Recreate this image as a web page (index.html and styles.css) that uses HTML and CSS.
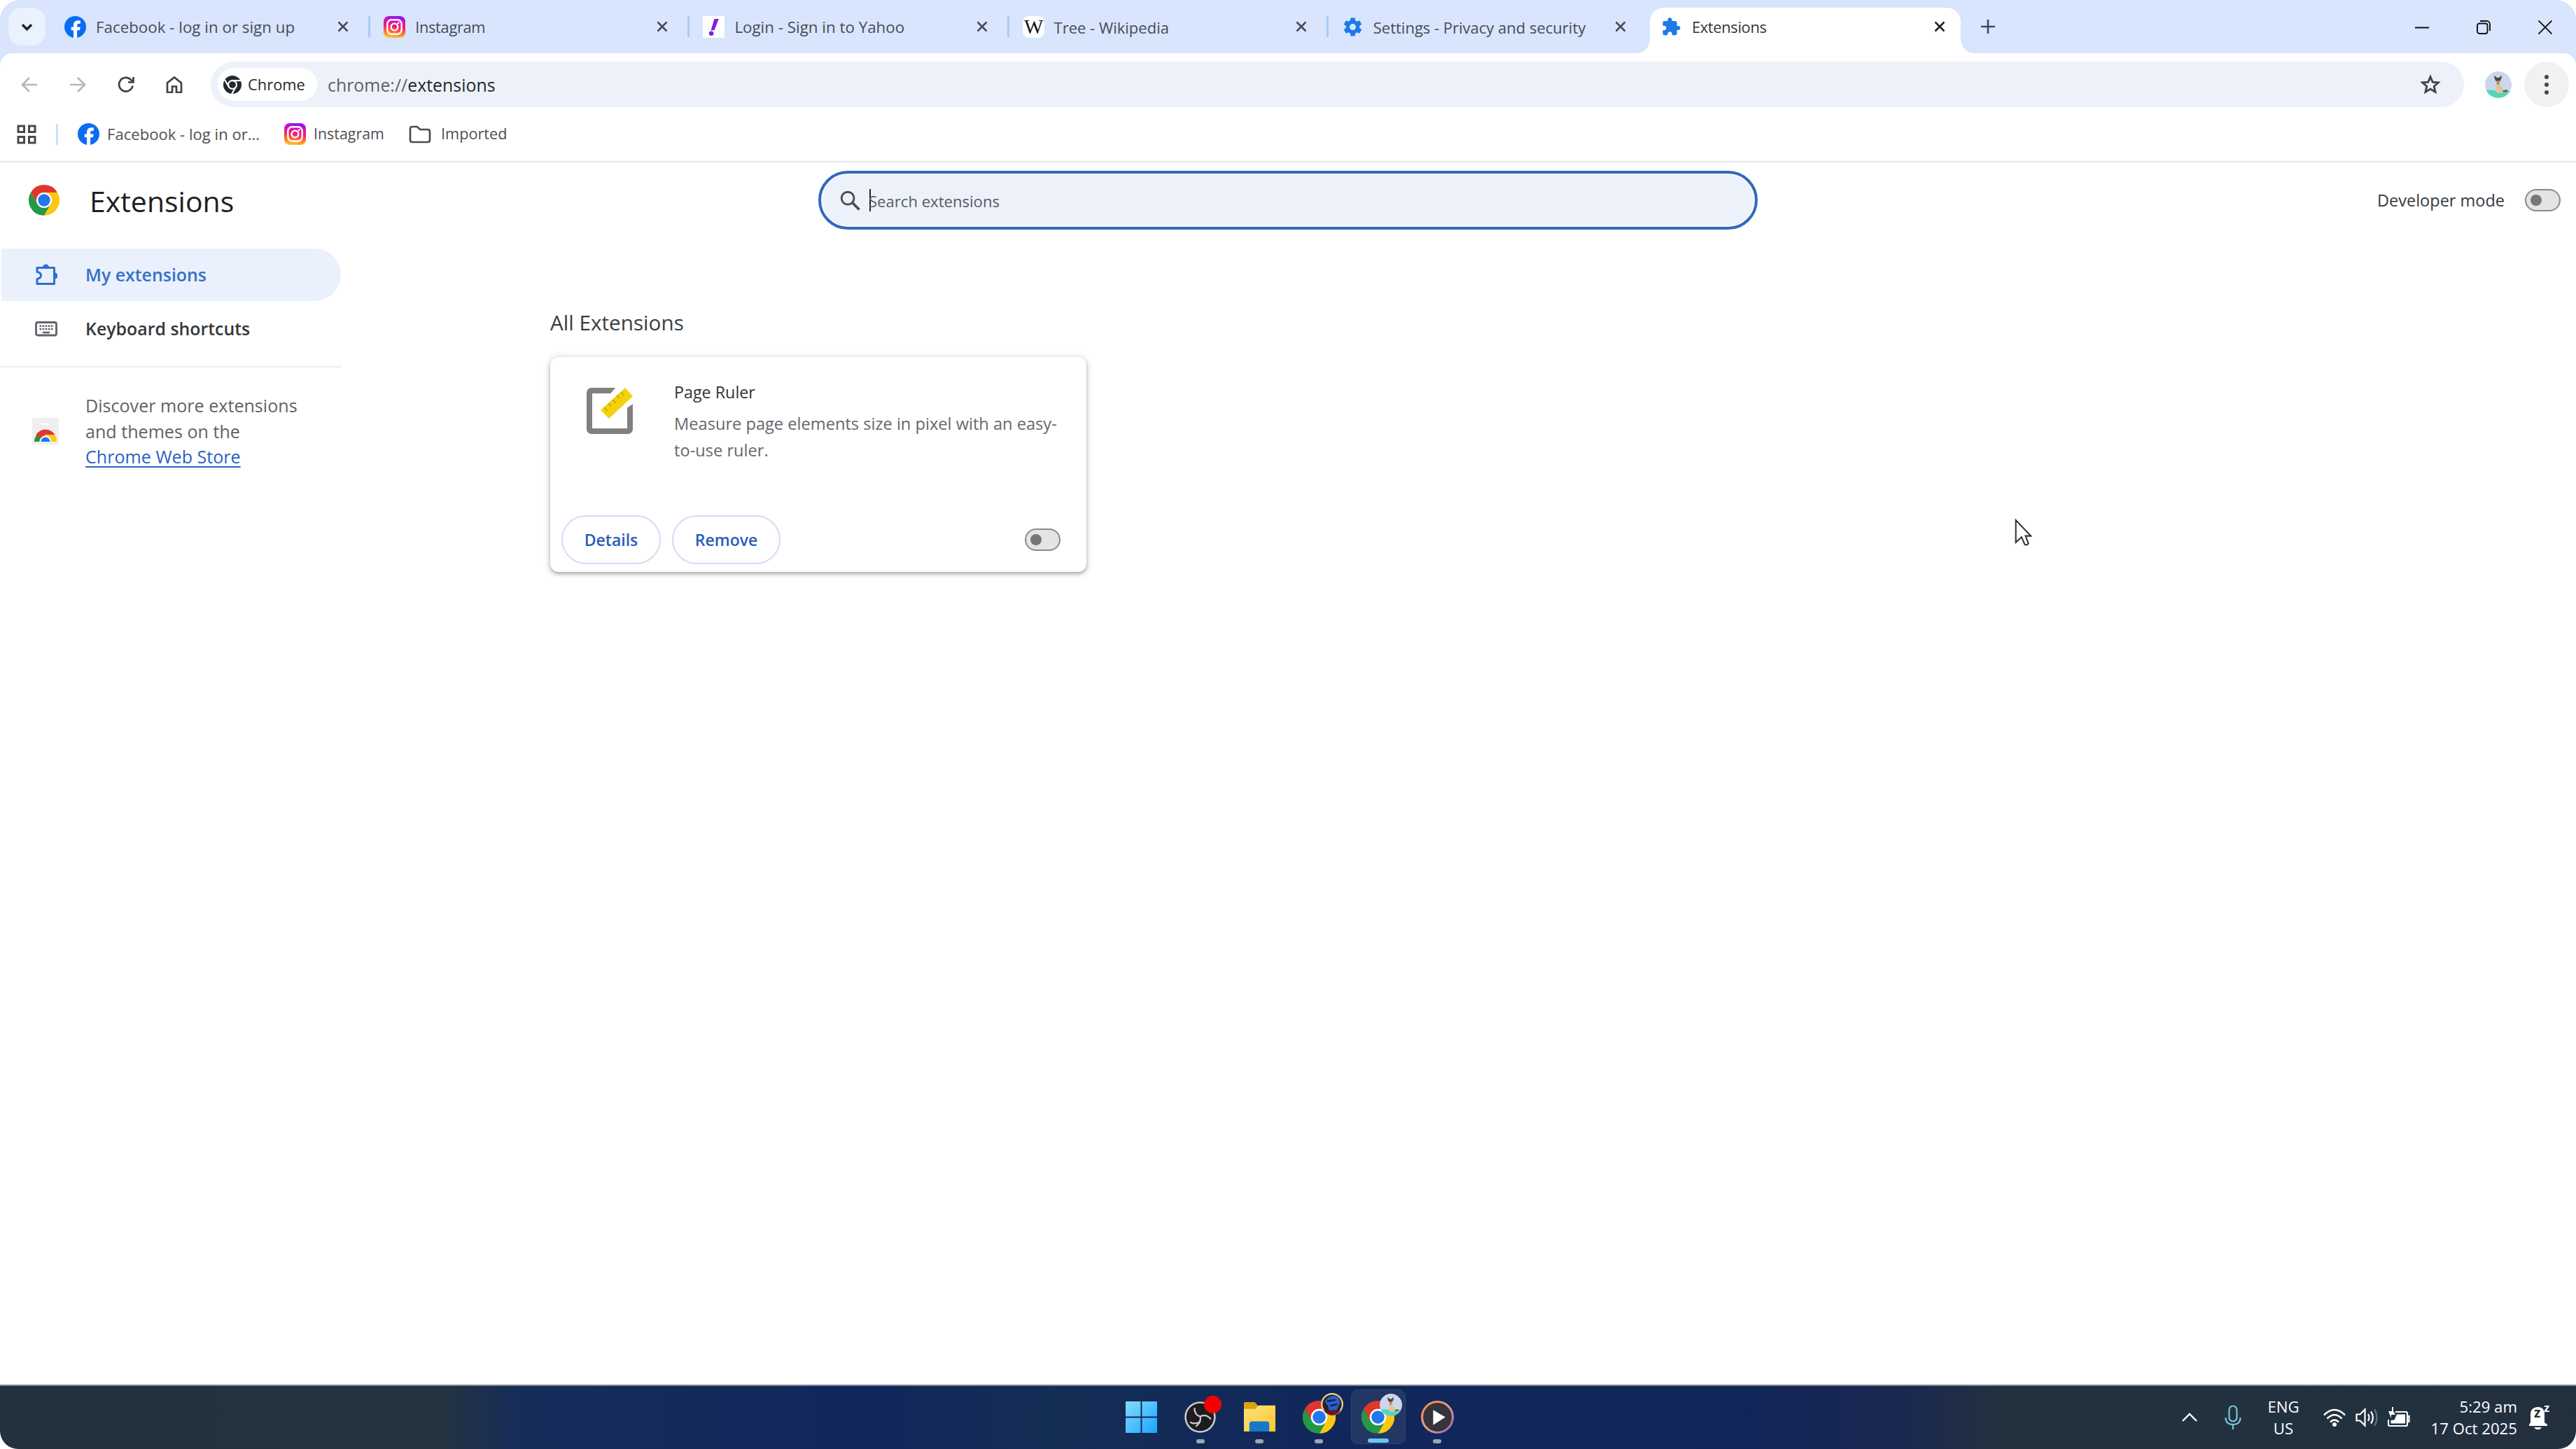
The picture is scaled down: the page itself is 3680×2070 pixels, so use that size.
FILE: index.html
```html
<!DOCTYPE html>
<html lang="en">
<head>
<meta charset="utf-8">
<title>Extensions</title>
<link rel="stylesheet" href="styles.css">
</head>
<body>
<svg class="defs" aria-hidden="true">
  <defs>
    <linearGradient id="ig" x1="0.35" y1="1" x2="0.5" y2="0">
      <stop offset="0" stop-color="#ffc93c"/><stop offset=".25" stop-color="#ff7a2a"/><stop offset=".5" stop-color="#f5206a"/><stop offset=".8" stop-color="#d30fc4"/><stop offset="1" stop-color="#8a18ea"/>
    </linearGradient>
    <linearGradient id="win" x1="0" y1="0" x2="1" y2="1"><stop offset="0" stop-color="#86dcff"/><stop offset="1" stop-color="#18a4ff"/></linearGradient>
    <linearGradient id="fold" x1="0" y1="0" x2="1" y2="1"><stop offset="0" stop-color="#ffe27d"/><stop offset="1" stop-color="#fbc62f"/></linearGradient>
    <linearGradient id="ring" x1="0" y1="0" x2="1" y2="1"><stop offset="0" stop-color="#f58a3c"/><stop offset=".5" stop-color="#e2a08c"/><stop offset="1" stop-color="#9a5fd0"/></linearGradient>
    <clipPath id="round"><circle cx="20" cy="20" r="20"/></clipPath>
  </defs>
  <symbol id="fb" viewBox="0 0 32 32"><circle cx="16" cy="16" r="16" fill="#0a6cf2"/><path d="M13.4 32V20.8H10v-4.7h3.4v-2.2c0-5.1 2.4-7.4 7.2-7.4.9 0 2.300.2 3 .4v4.200c-.3 0-.9-.1-1.700-.1-2.300 0-3.200.9-3.200 3.100v2h4.700l-.8 4.700h-3.900V32z" fill="#fff"/></symbol>
  <symbol id="insta" viewBox="0 0 32 32"><rect width="32" height="32" rx="8" fill="url(#ig)"/><g fill="none" stroke="#fff" stroke-width="2.500"><rect x="5.500" y="5.500" width="21" height="21" rx="6"/><circle cx="16" cy="16" r="5"/></g><circle cx="21.800" cy="10.200" r="1.500" fill="#fff"/></symbol>
  <symbol id="chrome" viewBox="0 0 48 48"><circle cx="24" cy="24" r="13" fill="#fff"/><path fill="#e0372d" d="M24 12h20.780A23.990 23.990 0 0 0 3.220 12.003L13.610 30A11.985 11.985 0 0 1 24 12z"/><path fill="#fdc813" d="M34.390 30.003 24 48A23.996 23.996 0 0 0 44.780 12H24A11.985 11.985 0 0 1 34.390 30.003z"/><path fill="#259847" d="M13.609 30.003 3.218 12.006A23.994 23.994 0 0 0 24.003 48L34.393 30.003A11.985 11.985 0 0 1 13.609 30.003z"/><circle cx="24" cy="24" r="9.500" fill="#2277ea"/></symbol>
  <symbol id="cross" viewBox="0 0 16 16"><path d="M1.500 1.500l13 13M14.500 1.500l-13 13" fill="none" stroke="currentColor" stroke-width="2.500"/></symbol>
  <symbol id="dog" viewBox="0 0 40 40"><g clip-path="url(#round)"><rect width="40" height="40" fill="#ccd6ec"/><path d="M0 30c8-5 14-1 20 0s12 1 20-1v11H0z" fill="#55d6bb"/><path d="M17 16c-1 6-1 11 0 16h11l4-2c-6-1-7-8-10-14z" fill="#dcc7a5"/><path d="M14 6l4 3.500h3L25 6c0 4-1 7-3 9h-5c-2-2-3-5-3-9z" fill="#51463f"/><path d="M17.500 14h4.500l-1 6h-3z" fill="#a98a68"/><path d="M27 30l7-1" stroke="#6b5138" stroke-width="2.500"/></g></symbol>
</svg>

<header class="tabs">
  <button class="tab-search"><svg viewBox="0 0 16 16"><path d="M3 5.500l5 5 5-5" fill="none" stroke="#1f2328" stroke-width="2.600"/></svg></button>
  <nav class="tab-list">
    <div class="tab"><svg class="fav"><use href="#fb"/></svg><span class="title">Facebook - log in or sign up</span><svg class="x"><use href="#cross"/></svg></div>
    <div class="tab"><svg class="fav"><use href="#insta"/></svg><span class="title narrow">Instagram</span><svg class="x"><use href="#cross"/></svg></div>
    <div class="tab"><svg class="fav" viewBox="0 0 32 32"><rect width="32" height="32" fill="#fff"/><path d="M17 4h6.500L17 21h-5z" fill="#7a22d8"/><circle cx="12.500" cy="25.500" r="3.400" fill="#7a22d8"/></svg><span class="title">Login - Sign in to Yahoo</span><svg class="x"><use href="#cross"/></svg></div>
    <div class="tab"><span class="fav wiki">W</span><span class="title tight">Tree - Wikipedia</span><svg class="x"><use href="#cross"/></svg></div>
    <div class="tab plain"><svg class="fav" viewBox="0 0 24 24"><path fill="#1d7ae8" d="M19.430 12.980c.04-.32.070-.64.070-.98s-.03-.66-.07-.98l2.110-1.650c.19-.15.240-.42.120-.64l-2-3.460c-.12-.22-.39-.3-.61-.22l-2.490 1c-.52-.4-1.080-.73-1.690-.98l-.38-2.650C14.460 2.180 14.250 2 14 2h-4c-.25 0-.46.180-.49.420l-.38 2.650c-.61.250-1.170.590-1.690.980l-2.490-1c-.23-.09-.49 0-.61.220l-2 3.460c-.13.220-.07.490.120.640l2.110 1.650c-.04.320-.07.650-.07.980s.03.660.070.980l-2.110 1.650c-.19.150-.24.420-.12.640l2 3.460c.12.220.39.300.61.220l2.490-1c.52.400 1.080.730 1.690.980l.38 2.650c.03.240.24.420.49.420h4c.25 0 .46-.18.490-.42l.38-2.650c.61-.25 1.170-.59 1.690-.98l2.490 1c.23.090.49 0 .61-.22l2-3.460c.12-.22.070-.49-.12-.64l-2.110-1.650zM12 15.500c-1.930 0-3.500-1.570-3.500-3.500s1.570-3.500 3.500-3.500 3.500 1.570 3.500 3.500-1.570 3.500-3.500 3.500z"/></svg><span class="title tight">Settings - Privacy and security</span><svg class="x"><use href="#cross"/></svg></div>
    <div class="tab active"><svg class="fav" viewBox="0 0 24 24"><path fill="#1d7ae8" transform="translate(.8 .8) scale(.92)" d="M20.500 11H19V7c0-1.100-.9-2-2-2h-4V3.500C13 2.120 11.880 1 10.500 1S8 2.120 8 3.500V5H4c-1.100 0-1.990.9-1.990 2v3.800H3.500c1.490 0 2.700 1.210 2.700 2.700s-1.210 2.700-2.700 2.700H2V20c0 1.100.9 2 2 2h3.800v-1.500c0-1.490 1.210-2.700 2.700-2.700 1.490 0 2.700 1.210 2.700 2.700V22H17c1.100 0 2-.9 2-2v-4h1.500c1.380 0 2.500-1.120 2.500-2.500S21.880 11 20.500 11z"/></svg><span class="title narrow">Extensions</span><svg class="x"><use href="#cross"/></svg></div>
  </nav>
  <svg class="plus" viewBox="0 0 20 20"><path d="M10 0v20M0 10h20" stroke="#3d4a60" stroke-width="2.600"/></svg>
  <div class="win-controls">
    <svg viewBox="0 0 20 20"><path d="M0 10.500h20" stroke="#111" stroke-width="2"/></svg>
    <svg viewBox="0 0 20 20"><g fill="none" stroke="#111" stroke-width="1.900"><rect x="1" y="4.500" width="14.500" height="14.500" rx="3"/><path d="M5 1h9.500a4.500 4.500 0 0 1 4.500 4.500V15"/></g></svg>
    <svg viewBox="0 0 20 20"><path d="M.5.5l19 19M19.500.5l-19 19" stroke="#111" stroke-width="1.900"/></svg>
  </div>
</header>

<div class="toolbar-wrap">
  <div class="toolbar">
    <div class="nav-icons">
      <svg class="off" viewBox="0 0 24 24"><path d="M23 12H2M12 2L2 12l10 10"/></svg>
      <svg class="off" viewBox="0 0 24 24"><path d="M1 12h21M12 2l10 10-10 10"/></svg>
      <svg viewBox="0 0 24 24"><path d="M21.500 13.500A9.800 9.800 0 1 1 19 5l3 3M22.500 1v7.500h-7.500"/></svg>
      <svg viewBox="0 0 24 24"><path d="M2 23V9.500L12 1.500l10 8V23h-7v-8.500H9V23z"/></svg>
    </div>
    <div class="omnibox">
      <div class="chip"><svg viewBox="0 0 48 48"><circle cx="24" cy="24" r="24" fill="#24272b"/><g stroke="#fff" stroke-width="4" fill="none"><circle cx="24" cy="24" r="11"/><path d="M24 13h22M33.500 29.500L22.500 48M14.500 29.500L3.500 10.500"/></g></svg><span>Chrome</span></div>
      <div class="url">chrome://<b>extensions</b></div>
      <svg class="star" viewBox="0 0 24 24"><path fill="#3c4043" stroke="#3c4043" stroke-width=".4" d="M22 9.240l-7.190-.62L12 2 9.190 8.630 2 9.240l5.460 4.730L5.820 21 12 17.270 18.180 21l-1.630-7.030L22 9.240zM12 15.400l-3.760 2.270 1-4.280-3.320-2.880 4.380-.38L12 6.100l1.710 4.040 4.380.38-3.320 2.880 1 4.280L12 15.400z"/></svg>
    </div>
    <svg class="avatar"><use href="#dog"/></svg>
    <div class="menu"><i></i><i></i><i></i></div>
  </div>
  <div class="bookmarks">
    <svg class="apps" viewBox="0 0 28 28"><g fill="none" stroke="#474a4d" stroke-width="3"><rect x="2" y="2" width="8.500" height="8.500"/><rect x="17.500" y="2" width="8.500" height="8.500"/><rect x="2" y="17.500" width="8.500" height="8.500"/><rect x="17.500" y="17.500" width="8.500" height="8.500"/></g></svg>
    <i class="bar"></i>
    <div class="bm bm-fb"><svg><use href="#fb"/></svg><span>Facebook - log in or...</span></div>
    <div class="bm bm-ig"><svg><use href="#insta"/></svg><span>Instagram</span></div>
    <div class="bm bm-im"><svg viewBox="0 0 32 32"><path d="M2 24V8q0-3 3-3h7l4 4h11q3 0 3 3v12q0 3-3 3H5q-3 0-3-3z" fill="none" stroke="#4a4d50" stroke-width="2.700"/></svg><span>Imported</span></div>
  </div>
</div>

<div class="page-head">
  <div class="brand"><svg><use href="#chrome"/></svg><h1>Extensions</h1></div>
  <div class="search">
    <svg viewBox="0 0 30 30"><g fill="none" stroke="#4a4d52" stroke-width="3"><circle cx="11.500" cy="11.500" r="9.200"/><path d="M18 18l10.500 10.500" stroke-width="3.800"/></g></svg>
    <i class="caret"></i><span>Search extensions</span>
  </div>
  <div class="dev"><span>Developer mode</span><i class="toggle"></i></div>
</div>

<main>
  <aside>
    <a class="item selected"><svg viewBox="0 0 32 32"><path d="M3 5.500h24.500V28.500H3v-7q5.500-1 5.500-5t-5.500-5z" fill="none" stroke="#2f6fd2" stroke-width="3" stroke-linejoin="round"/><path d="M11 5a4.500 4.500 0 0 1 9 0zM28 12.500a4.500 4.500 0 0 1 0 9z" fill="#2f6fd2"/></svg><span>My extensions</span></a>
    <a class="item"><svg viewBox="0 0 32 32"><rect x="1.500" y="6.500" width="29" height="18.500" rx="2.500" fill="none" stroke="#5f6368" stroke-width="2.800"/><path d="M6.500 11.700h19M6.500 16h19" stroke="#5f6368" stroke-width="2.600" stroke-dasharray="2.600 1.500"/><path d="M11 21h10" stroke="#5f6368" stroke-width="2.600"/></svg><span>Keyboard shortcuts</span></a>
    <hr>
    <div class="store">
      <svg viewBox="0 0 38 38"><rect width="38" height="38" rx="2" fill="#efefef"/><path d="M3 34a16 16 0 0 1 4.500-11l6 7-2 4z" fill="#259847"/><path d="M5.500 24a16 16 0 0 1 27 0H19l-6 6z" fill="#e0372d"/><path d="M19 24h13.500A16 16 0 0 1 35 34h-8z" fill="#fdc813"/><path d="M10.500 34a8.500 8.500 0 0 1 17 0z" fill="#fff"/><path d="M12.500 34a6.500 6.500 0 0 1 13 0z" fill="#2277ea"/><path d="M14 9h10" stroke="#fff" stroke-width="2.500"/></svg>
      <p>Discover more extensions<br>and themes on the<br><a>Chrome Web Store</a></p>
    </div>
  </aside>
  <section>
    <h2>All Extensions</h2>
    <article class="card">
      <div class="info">
        <svg class="ruler" viewBox="0 0 66 66"><rect x="4" y="4" width="58" height="58" rx="3" fill="none" stroke="#808080" stroke-width="8"/><path d="M42-1L26 18 15 36l14 15 19-16L68 22V-1z" fill="#fff"/><path d="M55 0L66 12 32 44 20 32z" fill="#f2d20c"/><path d="M25 28l5 5M31 22l4 4M37 17l5 5M43 11l4 4M49 6l5 5" stroke="#cfae00" stroke-width="2"/></svg>
        <div><h3>Page Ruler</h3><p>Measure page elements size in pixel with an easy-to-use ruler.</p></div>
      </div>
      <div class="actions"><button class="details">Details</button><button class="remove">Remove</button><i class="toggle"></i></div>
    </article>
  </section>
</main>

<footer class="taskbar">
  <div class="apps-row">
    <div class="app"><svg viewBox="0 0 46 46"><path fill="url(#win)" d="M1 2q0-1 1-1h20v21H1zM24 1h20q1 0 1 1v20H24zM1 24h21v21H2q-1 0-1-1zM24 24h21v20q0 1-1 1H24z"/></svg></div>
    <div class="app run"><svg viewBox="0 0 46 46"><circle cx="23" cy="23" r="20.500" fill="#1e1c1e" stroke="#c9cbd2" stroke-width="2.500"/><path d="M15 10q0 10 8 12 9-4 15 4M23 22q2 8-6 14M9 30q8 4 14-1" fill="none" stroke="#c9cbd2" stroke-width="2.200"/></svg><i class="rec"></i></div>
    <div class="app run"><svg viewBox="0 0 48 46"><path d="M1 3q0-2 2-2h14l5 6v8H1z" fill="#d9a30b"/><path d="M1 11h17l4-5h25v38H1z" fill="url(#fold)"/><path d="M9 44V33q0-4 4-4h21q4 0 4 4v11z" fill="#1878c8"/></svg></div>
    <div class="app run"><svg><use href="#chrome"/></svg><svg class="badge" viewBox="0 0 40 40"><circle cx="20" cy="20" r="18.500" fill="#23221f" stroke="#e8c98c" stroke-width="3"/><path d="M7 16q4-11 18-11 9 3 9 13l-6 13H14l-1-8z" fill="#2d5ccb"/><path d="M11 15l15-3M17 23l12-3" stroke="#101d4f" stroke-width="3"/><path d="M5 31h30q-6 9-15 9T5 31z" fill="#6a1426"/></svg></div>
    <div class="app run current"><svg><use href="#chrome"/></svg><svg class="badge"><use href="#dog"/></svg></div>
    <div class="app run"><svg viewBox="0 0 46 46"><circle cx="23" cy="23" r="21.500" fill="#34343a" stroke="url(#ring)" stroke-width="3"/><path d="M17 13l17 10-17 11z" fill="#fff"/></svg></div>
  </div>
  <div class="tray">
    <svg class="t-up" viewBox="0 0 22 22"><path d="M1 16L11 6l10 10" fill="none" stroke="#fff" stroke-width="2.400"/></svg>
    <svg class="t-mic" viewBox="0 0 24 36"><g fill="none" stroke="#7cc4d8" stroke-width="2.200"><rect x="6.500" y="1.500" width="11" height="22" rx="5.500"/><path d="M1.500 18q0 10 10.500 10t10.500-10M12 28v7"/></g></svg>
    <div class="lang">ENG<br>US</div>
    <svg class="t-wifi" viewBox="0 0 32 28"><g fill="none" stroke="#fff" stroke-width="2.500"><path d="M1 10.500q15-15 30 0M5.500 15.500q10.500-10.500 21 0M10 20.500q6-6 12 0"/></g><circle cx="16" cy="24" r="3" fill="#fff"/></svg>
    <svg class="t-vol" viewBox="0 0 32 30"><g fill="none" stroke="#fff" stroke-width="2.200"><path d="M1.500 10.500h5l7-7v23l-7-7h-5zM18 10q3 5 0 10M22 6.500q6 8.500 0 17"/><path d="M27 3q7 12 0 24" stroke="#64717c"/></g></svg>
    <svg class="t-bat" viewBox="0 0 32 30"><path d="M11 7h15q2 0 2 2v16q0 2-2 2H3q-2 0-2-2v-7M28 13h2.500v8H28" fill="none" stroke="#fff" stroke-width="2.200"/><path d="M13 10.500h12v13H4.500V19l5-.5z" fill="#fff"/><path d="M6 0v6H1l4 10v-5h6L8 6V0z" fill="#fff"/></svg>
    <div class="clock">5:29 am<br>17 Oct 2025</div>
    <div class="bell"><svg viewBox="0 0 28 34"><path d="M3 24V12Q3 3 13 2q5 0 8 3l2 5v14l4 3v2H1v-2zM8 31h11l-3 3h-5z" fill="#fff"/></svg><span class="z1">z</span><span class="z2">z</span></div>
  </div>
</footer>
<svg class="cursor" viewBox="0 0 24 38"><path d="M1.500 2v31l8-7.500 4.500 10.500q3 1.500 5-1.500L15 24h7.500z" fill="#fff" stroke="#333" stroke-width="2"/></svg>
</body>
</html>
```
FILE: styles.css
```css
* { box-sizing: border-box; }
body { margin: 0; width: 3680px; height: 2070px; overflow: hidden; background: #fff; color: #1f2023; font-family: "Open Sans", "Noto Sans", sans-serif; font-size: 23px; display: flex; flex-direction: column; position: relative; }
svg { display: block; flex: none; }
.defs { position: absolute; width: 0; height: 0; }
button { font: inherit; padding: 0; margin: 0; border: 0; background: none; }
h1, h2, h3, p { margin: 0; font-weight: 400; }

/* Tab strip */
.tabs { flex: none; height: 76px; padding: 11px 34px 0 12px; background: #d8e5fd; border-radius: 28px 28px 0 0; display: flex; align-items: flex-start; }
.tab-search { width: 53px; height: 54px; border-radius: 19px; background: #e9f2fd; display: grid; place-items: center; }
.tab-search svg { width: 21px; height: 21px; }
.tab-list { display: flex; margin-left: 12px; }
.tab { position: relative; width: 456.2px; height: 65px; padding: 0 18px 11px 15px; display: flex; align-items: center; }
.tab:not(.plain):not(.active)::after { content: ""; position: absolute; right: 4px; top: 12px; width: 3px; height: 30px; background: #a9cbf8; }
.fav { width: 31px; height: 31px; margin-right: 14px; }
.wiki { background: #fff; border-radius: 9px; font: 29px/30px "Liberation Serif", serif; text-align: center; letter-spacing: -1px; color: #111; }
.title { flex: 1; padding-top: 2px; font-size: 22.35px; line-height: 30px; color: #474c55; white-space: nowrap; }
.title.narrow { font-size: 21.9px; letter-spacing: -.35px; }
.title.tight { font-size: 22px; }
.tab .x { width: 16px; height: 16px; color: #454a52; margin-right: 17px; }
.tab.active { background: #fff; width: 444px; margin-left: -1px; padding-right: 6px; border-radius: 20px 20px 0 0; }
.tab.active .title { color: #33363a; }
.tab.active .x { color: #222; margin-right: 16px; }
.tab.active::before, .tab.active::after { content: ""; position: absolute; bottom: 0; width: 18px; height: 20px; }
.tab.active::before { left: -18px; background: radial-gradient(ellipse 18px 20px at 0 0, transparent 97%, #fff); }
.tab.active::after { right: -18px; background: radial-gradient(ellipse 18px 20px at 100% 0, transparent 97%, #fff); }
.plus { width: 20px; height: 20px; margin: 17px 0 0 29px; }
.win-controls { margin: 18px 0 0 auto; display: flex; gap: 68px; }
.win-controls svg { width: 20px; height: 20px; }

/* Toolbar */
.toolbar-wrap { flex: none; height: 156px; background: linear-gradient(#d8e5fd 24px, #fff 24px); border-bottom: 2px solid #e6e6e6; }
.toolbar { height: 89px; background: #fff; border-radius: 18px 18px 0 0; padding: 12px 10px 12px 30px; display: flex; align-items: center; }
.nav-icons { display: flex; gap: 45px; margin-right: 40px; }
.nav-icons svg { width: 24px; height: 24px; fill: none; stroke: #3f4246; stroke-width: 2.7; }
.nav-icons .off { stroke: #b4b6b9; }
.omnibox { flex: none; width: 3219px; height: 65px; border-radius: 33px; background: #edf2fa; padding: 0 31px 0 10px; display: flex; align-items: center; }
.chip { width: 142px; height: 47px; border-radius: 24px; background: #fff; padding-left: 8px; display: flex; align-items: center; gap: 9px; font-size: 21.9px; font-weight: 500; color: #26282c; }
.chip svg { width: 26px; height: 26px; }
.url { margin-left: 15px; font-size: 24.9px; color: #5d6166; }
.url b { font-weight: 400; color: #24272b; }
.star { width: 34px; height: 34px; margin-left: auto; }
.avatar { width: 38px; height: 38px; margin-left: 30px; }
.menu { width: 65px; height: 65px; margin-left: 18px; border-radius: 50%; background: #f1f1f2; display: flex; flex-direction: column; align-items: center; justify-content: center; gap: 5px; }
.menu i { width: 6px; height: 6px; border-radius: 50%; background: #45484c; }
.bookmarks { height: 53px; padding-left: 24px; display: flex; align-items: center; font-size: 22.1px; color: #4d5054; }
.apps { width: 28px; height: 28px; }
.bar { width: 3px; height: 30px; background: #cbdffb; margin: 0 28px 0 28px; }
.bm { display: flex; align-items: center; white-space: nowrap; }
.bm svg { width: 31px; height: 31px; margin-right: 11px; }
.bm span { margin-top: -2px; }
.bm-fb { width: 295px; }
.bm-ig { width: 178px; font-size: 21.4px; }
.bm-im { font-size: 21.7px; }
.bm-im svg { width: 32px; height: 32px; margin-right: 14px; }

/* Extensions header */
.page-head { flex: none; height: 108px; display: grid; grid-template-columns: 1fr 1342px 1fr; align-items: center; padding-right: 22px; padding-left: 22px; }
.brand { display: flex; align-items: center; padding-left: 19px; gap: 43px; }
.brand svg { width: 44px; height: 44px; }
.brand h1 { font-size: 41px; font-weight: 500; line-height: 56px; padding-top: 1px; }
.search { height: 84px; border: 4px solid #3468b8; border-radius: 42px; background: #edf1fa; box-shadow: inset 0 0 0 2px #f4fbff; padding-left: 27px; display: flex; align-items: center; font-size: 22.1px; font-weight: 500; color: #585b61; }
.search svg { width: 29px; height: 29px; }
.caret { width: 2px; height: 32px; background: #222; margin: 0 -3px 0 13px; }
.search span { padding-top: 1px; }
.dev { justify-self: end; display: flex; align-items: center; gap: 29px; font-size: 23.5px; color: #36393d; }
.toggle { flex: none; width: 51px; height: 32px; border: 2px solid #8a8a8a; border-radius: 16px; background: #e4e4e4; display: flex; align-items: center; padding-left: 6px; }
.toggle::before { content: ""; width: 16px; height: 16px; border-radius: 50%; background: #777; }

/* Body */
main { flex: 1; display: flex; }
aside { width: 491px; padding-top: 15px; }
.item { height: 75px; margin: 0 4px 2px 2px; padding-left: 48px; display: flex; align-items: center; gap: 41px; font-size: 24.9px; font-weight: 600; color: #34373b; }
.item svg { width: 32px; height: 32px; margin-right: -1px; }
.item span { margin-top: -1px; }
.item.selected { background: #eaf1fd; border-radius: 0 38px 38px 0; color: #3670c8; }
aside hr { border: 0; height: 2px; width: 488px; background: #eee; margin: 16px 0 36px; }
.store { display: flex; align-items: center; padding-left: 46px; gap: 38px; font-size: 25.1px; line-height: 36.7px; color: #5f6266; white-space: nowrap; }
.store svg { width: 38px; height: 38px; }
.store a { color: #2b62c4; text-decoration: underline; text-decoration-thickness: 2px; text-underline-offset: 4px; }
section { padding: 101px 0 0 295px; }
h2 { font-size: 29.7px; line-height: 40px; color: #3a3d41; }
.card { margin-top: 29px; width: 766px; height: 307px; border-radius: 12px; background: #fff; box-shadow: 0 3px 5px rgba(60,64,67,.34), 0 1px 9px 2px rgba(60,64,67,.15); padding: 33px 16px 11px; display: flex; flex-direction: column; }
.info { display: flex; }
.ruler { width: 66px; height: 66px; margin: 11px 59px 0 36px; }
h3 { font-size: 23.3px; line-height: 34px; color: #303337; }
.info p { width: 560px; margin-top: 9px; font-size: 23.63px; line-height: 38px; color: #65686c; }
.actions { margin-top: auto; display: flex; align-items: center; gap: 16px; }
.actions button { height: 70px; border: 2px solid #d3ddf3; border-radius: 35px; font-size: 23px; font-weight: 600; color: #295bbd; }
.details { width: 142px; }
.remove { width: 155px; }
.actions .toggle { margin: 0 21px 0 auto; }

/* Taskbar */
.taskbar { flex: none; position: relative; height: 92px; border-top: 2px solid #7e8792; border-radius: 0 0 26px 26px; background: linear-gradient(90deg, #22313d 0, #24343e 620px, #172c59 740px, #11275c 1250px, #142d54 1500px, #11275b 1900px, #122558 2500px, #1b2850 2730px, #22323e 2860px, #22303e); display: flex; justify-content: flex-end; }
.apps-row { position: absolute; left: 1589px; top: 5px; display: flex; gap: 2px; }
.app { position: relative; width: 82.6px; height: 78px; display: grid; place-items: center; }
.app > svg:first-child { width: 47px; height: 47px; }
.run::after { content: ""; position: absolute; left: 35px; bottom: 1px; width: 12px; height: 6px; border-radius: 3px; background: #9ca4b7; }
.current { background: #243664; border: 1px solid #304374; border-radius: 10px; width: 78px; margin: 0 2.300px; }
.current::after { left: 23px; bottom: 1px; width: 30px; background: #6bc5f6; }
.rec { position: absolute; right: 11px; top: 9px; width: 25px; height: 25px; border-radius: 50%; background: #f50000; }
.badge { position: absolute; right: 6px; top: 5px; width: 32px; height: 32px; }
.current .badge { right: 4px; }
.tray { position: relative; width: 600px; display: flex; align-items: center; color: #fff; font-size: 22.2px; line-height: 31px; padding: 0 40px 1px 37px; }
.t-up { width: 22px; height: 22px; }
.t-mic { width: 24px; height: 36px; margin-left: 39px; }
.lang { width: 60px; margin-left: 30px; text-align: center; }
.t-wifi { width: 32px; height: 28px; margin-left: 27px; }
.t-vol { width: 32px; height: 30px; margin-left: 14px; }
.t-bat { width: 32px; height: 30px; margin-left: 14px; }
.clock { margin-left: auto; text-align: right; white-space: nowrap; }
.bell { position: relative; width: 28px; height: 34px; margin-left: 16px; }
.bell svg { width: 28px; height: 34px; }
.bell span { position: absolute; font-weight: 700; line-height: 1; }
.z1 { left: 8px; top: 1px; font-size: 19px; color: #22303e; }
.z2 { right: -2px; top: -5px; font-size: 16px; color: #fff; }
.cursor { position: absolute; left: 2878px; top: 741px; width: 25px; height: 39px; }
```
